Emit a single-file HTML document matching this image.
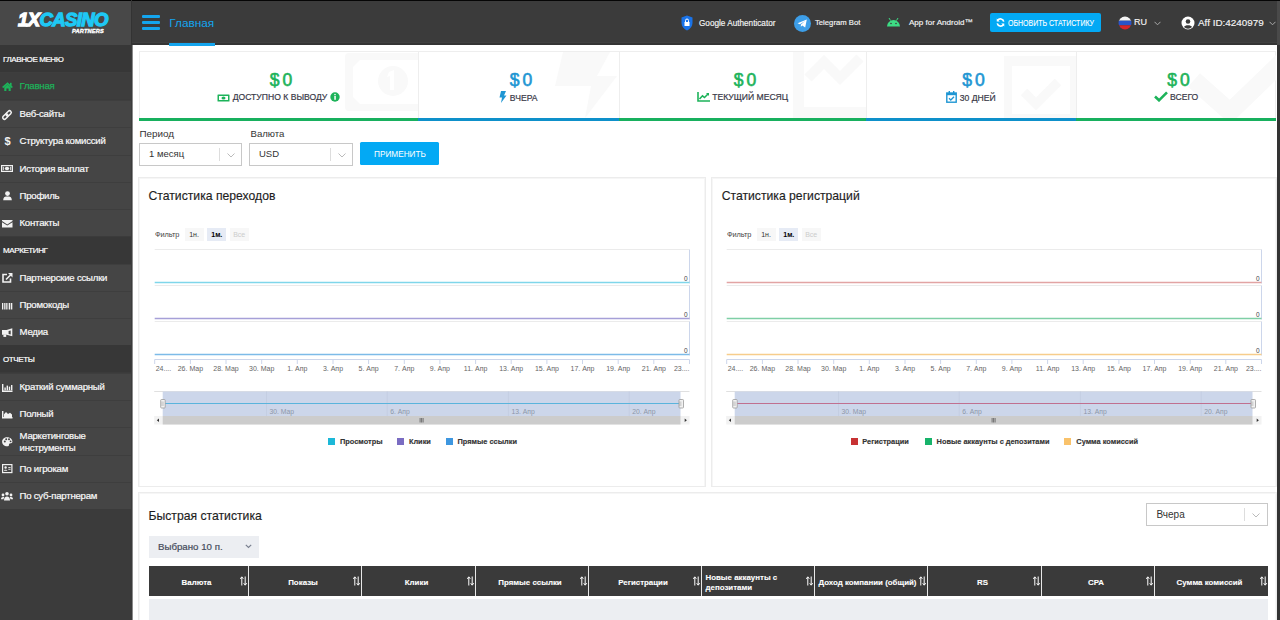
<!DOCTYPE html>
<html><head><meta charset="utf-8">
<style>
*{margin:0;padding:0;box-sizing:border-box}
html,body{width:1280px;height:620px;overflow:hidden;background:#fff;font-family:"Liberation Sans",sans-serif;color:#333}
.a{position:absolute}
#sb{left:0;top:0;width:132px;height:620px;background:#3b3b3b}
#logo{left:0;top:0;width:131px;height:45px;background:#484848}
.sec{position:absolute;left:0;width:131px;height:27px;background:#373737;color:#fff;font-size:8px;line-height:27px;padding-top:0.5px;padding-left:3px;letter-spacing:-0.4px;-webkit-text-stroke:0.2px #fff}
.mi{position:absolute;left:0;width:131px;height:27.3px;background:#454545;border-top:1px solid #3e3e3e;color:#fafafa;font-size:9.6px;letter-spacing:-0.22px;line-height:26.5px;padding-left:19.5px;white-space:nowrap;-webkit-text-stroke:0.2px #fafafa}
.mi.act{color:#1db35a;background:#3d3d3d;-webkit-text-stroke:0.25px #1db35a}
.mi svg{position:absolute;left:3px;top:9px}
#hdr{left:132px;top:0;width:1145px;height:45px;background:#3b3b3b;border-top:1px solid #151515}
#rstrip{left:1277px;top:0;width:3px;height:620px;background:#333}

.card{position:absolute;top:51px;height:70px;border-top:1px solid #eee;border-bottom:3px solid #18b05e}
.card.b{border-bottom-color:#0e90ca}
.val{position:absolute;left:4px;right:0;top:17.5px;text-align:center;font-size:17.5px;font-weight:normal;line-height:20px;letter-spacing:-1px;-webkit-text-stroke:0.6px currentColor}
.lbl{position:absolute;left:0;right:0;top:39px;text-align:center;font-size:8.6px;line-height:12px;color:#3a3a48;white-space:nowrap;-webkit-text-stroke:0.2px #3a3a48}
.lbl svg{vertical-align:-2px}
.sel{position:absolute;height:23px;border:1px solid #c8c8c8;background:#fff;font-size:9.5px;line-height:20px;padding-left:9px;color:#333}
.sel i{position:absolute;top:4px;bottom:4px;width:1px;background:#ddd}
.sel svg{position:absolute;top:8px}
.pan{position:absolute;border:1px solid #ececec;background:#fff;box-shadow:inset 1px 1px 0 #f6f6f6,inset -1px 0 0 #f6f6f6}
.ttl{position:absolute;font-size:12.2px;line-height:14px;color:#1e1e1e;-webkit-text-stroke:0.15px #1e1e1e}
.flt{position:absolute;font-size:7.4px;line-height:13px;color:#444;letter-spacing:-0.1px}
.fb{position:absolute;top:0;width:19px;height:13px;text-align:center;background:#f7f7f7;font-size:7px;line-height:13px;color:#333}
.hd{position:absolute;top:566px;height:30px;background:#3a3a3a;border-right:1px solid #e8e8e8;color:#fff;font-size:7.9px;font-weight:bold;line-height:34px;text-align:center;padding-right:4px;-webkit-text-stroke:0.1px #fff}
.hd span{position:absolute;right:1px;top:10px;line-height:0}.hd span svg{display:block}
</style></head><body>
<div id="sb" class="a">
  <div id="logo" class="a">
    <div class="a" style="left:18px;top:8.5px;font-size:18.5px;font-weight:bold;font-style:italic;letter-spacing:-0.6px;line-height:22px;white-space:nowrap"><span style="color:#fff;-webkit-text-stroke:1.3px #fff">1X</span><span style="color:#1ec8f5;-webkit-text-stroke:1.3px #1ec8f5">CASINO</span></div>
    <div class="a" style="left:72px;top:27.5px;font-size:5.6px;font-weight:bold;font-style:italic;color:#fff;letter-spacing:0.2px;line-height:6px;-webkit-text-stroke:0.35px #fff">PARTNERS</div>
  </div>
  <div class="sec" style="top:45px">ГЛАВНОЕ МЕНЮ</div>
  <div class="mi act" style="top:72px">Главная</div>
  <div class="mi" style="top:100px">Веб-сайты</div>
  <div class="mi" style="top:127.3px">Структура комиссий</div>
  <div class="mi" style="top:154.6px">История выплат</div>
  <div class="mi" style="top:181.9px">Профиль</div>
  <div class="mi" style="top:209.2px">Контакты</div>
  <div class="sec" style="top:236.5px">МАРКЕТИНГ</div>
  <div class="mi" style="top:263.5px">Партнерские ссылки</div>
  <div class="mi" style="top:290.8px">Промокоды</div>
  <div class="mi" style="top:318.1px">Медиа</div>
  <div class="sec" style="top:345.4px">ОТЧЕТЫ</div>
  <div class="mi" style="top:372.7px">Краткий суммарный</div>
  <div class="mi" style="top:400px">Полный</div>
  <div class="mi" style="top:427.3px;line-height:11.6px;padding-top:2px">Маркетинговые<br>инструменты</div>
  <div class="mi" style="top:454.6px">По игрокам</div>
  <div class="mi" style="top:481.9px">По суб-партнерам</div>
</div>
<svg class="a" style="left:1.5px;top:82px;overflow:visible" width="11" height="9" viewBox="0 0 11 9"><path d="M5.5 0.3 L11 5 L9.6 5.9 L5.5 2.4 L1.4 5.9 L0 5 Z" fill="#1db35a"/><path d="M2.3 5.2 L5.5 2.6 L8.7 5.2 V9 H6.6 V6.6 H4.4 V9 H2.3 Z" fill="#1db35a"/><rect x="8" y="0.8" width="1.6" height="3" fill="#1db35a"/></svg>
<svg class="a" style="left:2.3px;top:109.6px;overflow:visible" width="10" height="10" viewBox="0 0 10 10"><g transform="rotate(-45 5 5)"><rect x="4.3" y="3.3" width="6" height="3.4" rx="1.7" fill="none" stroke="#f2f2f2" stroke-width="1.5"/><rect x="-0.3" y="3.3" width="6" height="3.4" rx="1.7" fill="none" stroke="#f2f2f2" stroke-width="1.5"/></g></svg>
<svg class="a" style="left:3.5px;top:136.5px;overflow:visible" width="7" height="9" viewBox="0 0 7 9"><text x="3.5" y="8.4" font-size="11" font-weight="bold" text-anchor="middle" fill="#f2f2f2" font-family="Liberation Sans">$</text></svg>
<svg class="a" style="left:1px;top:165px;overflow:visible" width="12" height="7" viewBox="0 0 12 7"><rect x="0.6" y="0.6" width="10.8" height="5.8" fill="none" stroke="#f2f2f2" stroke-width="1.2"/><ellipse cx="6" cy="3.5" rx="2.2" ry="1.8" fill="#f2f2f2"/><rect x="1.8" y="1.8" width="1" height="3.4" fill="#f2f2f2"/><rect x="9.2" y="1.8" width="1" height="3.4" fill="#f2f2f2"/></svg>
<svg class="a" style="left:2.8px;top:191px;overflow:visible" width="9" height="9.5" viewBox="0 0 9 9.5"><circle cx="4.5" cy="2.6" r="2.4" fill="#f2f2f2"/><path d="M0.2 9.3 C0.2 6.3 1.8 5.4 3 5.4 H6 C7.2 5.4 8.8 6.3 8.8 9.3 Z" fill="#f2f2f2"/></svg>
<svg class="a" style="left:2px;top:219.5px;overflow:visible" width="10.5" height="7.5" viewBox="0 0 10.5 7.5"><path d="M0 0 H10.5 V1 L5.25 4.4 L0 1 Z" fill="#f2f2f2"/><path d="M0 2.2 L5.25 5.6 L10.5 2.2 V7.5 H0 Z" fill="#f2f2f2"/></svg>
<svg class="a" style="left:2px;top:272.5px;overflow:visible" width="10.5" height="10" viewBox="0 0 10.5 10"><path d="M5 1.5 H1 V9 H8.5 V5.5" stroke="#f2f2f2" stroke-width="1.6" fill="none"/><path d="M4 6.5 L9.3 1.2" stroke="#f2f2f2" stroke-width="1.6"/><path d="M6 0 H10.5 V4.5 Z" fill="#f2f2f2"/></svg>
<svg class="a" style="left:2px;top:302.5px;overflow:visible" width="10.5" height="6.5" viewBox="0 0 10.5 6.5"><rect x="0" y="0" width="1.3" height="6.5" fill="#f2f2f2"/><rect x="2" y="0" width="0.8" height="6.5" fill="#f2f2f2"/><rect x="3.5" y="0" width="1.3" height="6.5" fill="#f2f2f2"/><rect x="5.5" y="0" width="0.8" height="6.5" fill="#f2f2f2"/><rect x="7" y="0" width="1.3" height="6.5" fill="#f2f2f2"/><rect x="9" y="0" width="1.3" height="6.5" fill="#f2f2f2"/></svg>
<svg class="a" style="left:1.8px;top:327.6px;overflow:visible" width="10.5" height="9" viewBox="0 0 10.5 9"><path d="M0 2.1 H4.6 L10.3 0.2 V8.3 L4.6 6.8 H0 Z M6.6 3 V5.9 L8.7 6.6 V2.4 Z" fill="#f2f2f2" fill-rule="evenodd"/><rect x="1.4" y="6.5" width="2.8" height="2.4" fill="#f2f2f2"/></svg>
<svg class="a" style="left:2px;top:383.5px;overflow:visible" width="10.5" height="8" viewBox="0 0 10.5 8"><path d="M0.7 0 V7.3 H10.5" stroke="#f2f2f2" stroke-width="1.4" fill="none"/><rect x="2.4" y="3.5" width="1.4" height="2.8" fill="#f2f2f2"/><rect x="4.6" y="1.6" width="1.4" height="4.7" fill="#f2f2f2"/><rect x="6.8" y="2.6" width="1.4" height="3.7" fill="#f2f2f2"/><rect x="9" y="1" width="1.4" height="5.3" fill="#f2f2f2"/></svg>
<svg class="a" style="left:2px;top:410.5px;overflow:visible" width="10.5" height="7.5" viewBox="0 0 10.5 7.5"><path d="M0.7 0 V6.8 H10.5" stroke="#f2f2f2" stroke-width="1.4" fill="none"/><path d="M2 6 V3.3 L4 1 L6 3 L8 1.8 L10 3.5 V6 Z" fill="#f2f2f2"/></svg>
<svg class="a" style="left:1.8px;top:437px;overflow:visible" width="10.5" height="9.5" viewBox="0 0 10.5 9.5"><path d="M5.2 0.2 C8.4 0.2 10.4 2.4 10.4 4.6 C10.4 6.8 8 6.2 7.2 6.9 C6.5 7.6 7.8 9.3 5.2 9.3 C2.2 9.3 0.1 7 0.1 4.7 C0.1 2.2 2.3 0.2 5.2 0.2 Z" fill="#f2f2f2"/><circle cx="2.8" cy="4.5" r="1" fill="#454545"/><circle cx="4.2" cy="2.3" r="1" fill="#454545"/><circle cx="7" cy="2.3" r="1" fill="#454545"/><circle cx="8.6" cy="4.3" r="0.9" fill="#454545"/></svg>
<svg class="a" style="left:1.8px;top:463.8px;overflow:visible" width="10.5" height="9.2" viewBox="0 0 10.5 9.2"><rect x="0.6" y="0.6" width="9.3" height="8" fill="none" stroke="#f2f2f2" stroke-width="1.2"/><circle cx="3.6" cy="3.5" r="1.2" fill="#f2f2f2"/><path d="M1.8 6.8 C1.8 5.3 5.4 5.3 5.4 6.8 Z" fill="#f2f2f2"/><rect x="6.3" y="3" width="2.3" height="0.9" fill="#f2f2f2"/><rect x="6.3" y="4.8" width="2.3" height="0.9" fill="#f2f2f2"/></svg>
<svg class="a" style="left:1.2px;top:492.2px;overflow:visible" width="12" height="8.5" viewBox="0 0 12 8.5"><circle cx="6" cy="1.8" r="1.8" fill="#f2f2f2"/><circle cx="2" cy="3" r="1.4" fill="#f2f2f2"/><circle cx="10" cy="3" r="1.4" fill="#f2f2f2"/><path d="M3 8.5 C3 5.5 4.2 4.4 6 4.4 C7.8 4.4 9 5.5 9 8.5 Z" fill="#f2f2f2"/><path d="M0 7.3 C0 5.6 0.8 4.9 2 4.9 C2.6 4.9 3 5.1 3.3 5.3 C2.8 6 2.6 6.6 2.5 7.3 Z" fill="#f2f2f2"/><path d="M12 7.3 C12 5.6 11.2 4.9 10 4.9 C9.4 4.9 9 5.1 8.7 5.3 C9.2 6 9.4 6.6 9.5 7.3 Z" fill="#f2f2f2"/></svg>
<div id="hdr" class="a">
  <div class="a" style="left:10px;top:14px;width:18px;height:3px;background:#14a5ee;border-radius:1px"></div>
  <div class="a" style="left:10px;top:20px;width:18px;height:3px;background:#14a5ee;border-radius:1px"></div>
  <div class="a" style="left:10px;top:26px;width:18px;height:3px;background:#14a5ee;border-radius:1px"></div>
  <div class="a" style="left:37.3px;top:15.3px;font-size:11.8px;line-height:14px;color:#14a5ee">Главная</div>
  <div class="a" style="left:0;top:41px;width:1145px;height:1px;background:#404040"></div>
  <div class="a" style="left:0;top:42px;width:1145px;height:2px;background:#343434"></div>
  <div class="a" style="left:37px;top:42px;width:46px;height:3px;background:#14a5ee"></div>
  <svg class="a" style="left:549px;top:14px" width="12" height="16" viewBox="0 0 12 16"><path d="M6 0.5 L11.5 2.5 V8 C11.5 11.5 9 14 6 15.5 C3 14 0.5 11.5 0.5 8 V2.5 Z" fill="#1a73e8"/><rect x="3.5" y="7" width="5" height="4" fill="#fff"/><path d="M4.5 7 V5.5 A1.5 1.5 0 0 1 7.5 5.5 V7" stroke="#fff" stroke-width="1" fill="none"/></svg>
  <div class="a" style="left:567px;top:16.5px;font-size:8.2px;line-height:12px;color:#f4f4f4;-webkit-text-stroke:0.15px #f4f4f4">Google Authenticator</div>
  <svg class="a" style="left:662px;top:14px" width="17" height="17" viewBox="0 0 17 17"><circle cx="8.5" cy="8.5" r="8.5" fill="#3d9ee8"/><path d="M3.5 8.3 L12.8 4.6 L11.2 12.6 L8.3 10.4 L6.8 11.8 L6.9 9.6 L11.2 5.9 L5.9 9.2 Z" fill="#fff"/></svg>
  <div class="a" style="left:683px;top:16px;font-size:7.7px;line-height:12px;color:#f4f4f4;-webkit-text-stroke:0.15px #f4f4f4">Telegram Bot</div>
  <svg class="a" style="left:754px;top:15px" width="15" height="11" viewBox="0 0 15 11"><path d="M1 10.5 A6.5 6.5 0 0 1 14 10.5 Z" fill="#3ddc84"/><path d="M3 2 L4.5 4.5 M12 2 L10.5 4.5" stroke="#3ddc84" stroke-width="1"/><circle cx="5" cy="7.5" r="0.8" fill="#3b3b3b"/><circle cx="10" cy="7.5" r="0.8" fill="#3b3b3b"/></svg>
  <div class="a" style="left:777px;top:16px;font-size:8.05px;line-height:12px;color:#f4f4f4;-webkit-text-stroke:0.15px #f4f4f4">App for Android™</div>
  <div class="a" style="left:858px;top:12px;width:111px;height:19px;background:#03a9f4;border-radius:2px"></div>
  <svg class="a" style="left:864px;top:17px" width="9" height="9" viewBox="0 0 10 10"><path d="M8.6 4 A3.8 3.8 0 0 0 1.8 2.6" stroke="#fff" stroke-width="1.8" fill="none"/><path d="M0.8 0.6 V4 H4.2 Z" fill="#fff"/><path d="M1.4 6 A3.8 3.8 0 0 0 8.2 7.4" stroke="#fff" stroke-width="1.8" fill="none"/><path d="M9.2 9.4 V6 H5.8 Z" fill="#fff"/></svg>
  <div class="a" style="left:876px;top:16px;font-size:8.3px;line-height:12px;color:#fff;transform:scaleX(0.843);transform-origin:0 0;white-space:nowrap;-webkit-text-stroke:0.1px #fff">ОБНОВИТЬ СТАТИСТИКУ</div>
  <svg class="a" style="left:985.5px;top:14.8px" width="14" height="14" viewBox="0 0 14 14"><defs><clipPath id="fc"><circle cx="7" cy="7" r="6.5"/></clipPath></defs><g clip-path="url(#fc)"><rect x="0" y="0" width="14" height="4.7" fill="#f4f4f4"/><rect x="0" y="4.7" width="14" height="4.6" fill="#2a54c8"/><rect x="0" y="9.3" width="14" height="4.7" fill="#d8262a"/></g></svg>
  <div class="a" style="left:1002px;top:15px;font-size:9px;line-height:13px;color:#f4f4f4;-webkit-text-stroke:0.15px #f4f4f4">RU</div>
  <svg class="a" style="left:1022px;top:20px" width="7" height="5" viewBox="0 0 7 5"><path d="M0.5 0.8 L3.5 3.8 L6.5 0.8" stroke="#aaa" stroke-width="1" fill="none"/></svg>
  <svg class="a" style="left:1049px;top:14.8px" width="14" height="14" viewBox="0 0 14 14"><circle cx="7" cy="7" r="6.5" fill="#fff"/><circle cx="7" cy="5.5" r="2.3" fill="#3b3b3b"/><path d="M3 11 C4 8.8 10 8.8 11 11 A5.5 5.5 0 0 1 3 11 Z" fill="#3b3b3b"/></svg>
  <div class="a" style="left:1066px;top:15.3px;font-size:9.9px;line-height:13px;color:#f4f4f4;-webkit-text-stroke:0.15px #f4f4f4">Aff ID:4240979</div>
  <svg class="a" style="left:1137px;top:20px" width="7" height="5" viewBox="0 0 7 5"><path d="M0.5 0.8 L3.5 3.8 L6.5 0.8" stroke="#aaa" stroke-width="1" fill="none"/></svg>
</div>
<div class="a" style="left:139px;top:51px;width:1137px;height:70px;border-left:1px solid #eee;border-right:1px solid #eee"></div><svg class="a" style="left:345px;top:52px" width="73" height="60" viewBox="0 0 73 60"><rect x="0" y="1" width="90" height="58" rx="4" fill="#f9f9f9"/><path d="M15 8 H80 V52 H15 L8 45 V15 Z" fill="#fff"/><circle cx="48" cy="29" r="15" fill="#f9f9f9"/><path d="M44 20 L49 18 V38 H45 V24 L42 25 Z" fill="#fff"/></svg><svg class="a" style="left:555px;top:52px" width="64" height="66" viewBox="0 0 64 66"><path d="M8 0 H55 L42 24 H62 L30 66 L36 34 H0 Z" fill="#f9f9f9"/></svg><svg class="a" style="left:790px;top:52px" width="76" height="66" viewBox="0 0 76 66"><path d="M14 0 V55 H76 V66 H3 V0 Z" fill="#f9f9f9"/><path d="M18 26 L34 10 L50 26 L70 6" stroke="#f9f9f9" stroke-width="10" fill="none"/></svg><svg class="a" style="left:1000px;top:52px" width="76" height="66" viewBox="0 0 76 66"><rect x="4" y="4" width="72" height="62" fill="#f9f9f9"/><rect x="12" y="14" width="58" height="48" fill="#fff"/><path d="M24 40 L36 52 L58 30" stroke="#f9f9f9" stroke-width="9" fill="none"/></svg><svg class="a" style="left:1180px;top:52px" width="96" height="66" viewBox="0 0 96 66"><path d="M14 28 L50 60 L110 2" stroke="#f9f9f9" stroke-width="18" fill="none"/></svg><div class="card " style="left:139px;width:279px"><div class="val" style="color:#1db35a">$ 0</div><div class="lbl"><svg width="13" height="8" viewBox="0 0 13 8"><rect x="0.5" y="0.5" width="12" height="7" rx="0.5" fill="#1db35a"/><rect x="2" y="2" width="9" height="4" fill="#fff"/><ellipse cx="6.5" cy="4" rx="2" ry="1.6" fill="#1db35a"/></svg> ДОСТУПНО К ВЫВОДУ <svg width="10" height="10" viewBox="0 0 10 10"><circle cx="5" cy="5" r="4.7" fill="#1db35a"/><rect x="4.3" y="4" width="1.5" height="3.8" fill="#fff"/><circle cx="5" cy="2.6" r="0.8" fill="#fff"/></svg></div></div><div class="card b" style="left:418px;width:201px"><div class="val" style="color:#1e96d3">$ 0</div><div class="lbl"><svg width="8" height="12" viewBox="0 0 8 12"><path d="M2 0 H7 L5 4.5 H7.5 L2 12 L3 6.5 H0.5 Z" fill="#1e96d3"/></svg> ВЧЕРА</div></div><div class="card " style="left:619px;width:247px"><div class="val" style="color:#1db35a">$ 0</div><div class="lbl"><svg width="13" height="10" viewBox="0 0 13 10"><path d="M1 0 V9 H13" stroke="#1db35a" stroke-width="1.6" fill="none"/><path d="M2.5 7 L5.5 3.8 L7.5 5.5 L11 2" stroke="#1db35a" stroke-width="1.6" fill="none"/><path d="M9 1 H12 V4 Z" fill="#1db35a"/></svg> ТЕКУЩИЙ МЕСЯЦ</div></div><div class="card b" style="left:866px;width:210px"><div class="val" style="color:#1e96d3">$ 0</div><div class="lbl"><svg width="11" height="12" viewBox="0 0 11 12"><rect x="0.8" y="2" width="9.4" height="9.2" fill="none" stroke="#1e96d3" stroke-width="1.4"/><rect x="0.8" y="2" width="9.4" height="2.2" fill="#1e96d3"/><rect x="2.6" y="0" width="1.4" height="3" fill="#1e96d3"/><rect x="7" y="0" width="1.4" height="3" fill="#1e96d3"/><path d="M3 7.3 L4.8 9 L8 5.8" stroke="#1e96d3" stroke-width="1.3" fill="none"/></svg> 30 ДНЕЙ</div></div><div class="card " style="left:1076px;width:200px"><div class="val" style="color:#1db35a">$ 0</div><div class="lbl"><svg width="14" height="11" viewBox="0 0 14 11"><path d="M1 5.5 L5 9.3 L13 1.3" stroke="#1db35a" stroke-width="2.6" fill="none"/></svg> ВСЕГО</div></div><div class="a" style="left:418px;top:52px;width:1px;height:66px;background:#eee"></div><div class="a" style="left:619px;top:52px;width:1px;height:66px;background:#eee"></div><div class="a" style="left:866px;top:52px;width:1px;height:66px;background:#eee"></div><div class="a" style="left:1076px;top:52px;width:1px;height:66px;background:#eee"></div><div class="a" style="left:139.5px;top:127.7px;font-size:9.9px;line-height:12px;color:#333">Период</div><div class="a" style="left:250.5px;top:127.7px;font-size:9.6px;line-height:12px;color:#333">Валюта</div><div class="sel" style="left:139px;top:143px;width:103px">1 месяц<i style="left:79px"></i><span style="position:absolute;left:87px;top:0.5px"><svg width="8" height="5" viewBox="0 0 8 5"><path d="M0.5 0.5 L4 4 L7.5 0.5" stroke="#bbb" stroke-width="1" fill="none"/></svg></span></div><div class="sel" style="left:249px;top:143px;width:104px">USD<i style="left:80px"></i><span style="position:absolute;left:88px;top:0.5px"><svg width="8" height="5" viewBox="0 0 8 5"><path d="M0.5 0.5 L4 4 L7.5 0.5" stroke="#bbb" stroke-width="1" fill="none"/></svg></span></div><div class="a" style="left:360px;top:142px;width:79px;height:23px;background:#03a9f4;border-radius:1.5px"></div><div class="a" style="left:373.7px;top:148px;font-size:9.6px;line-height:12px;color:#fff;transform:scaleX(0.858);transform-origin:0 0;white-space:nowrap">ПРИМЕНИТЬ</div>
<div class="pan" style="left:138px;top:177px;width:568px;height:310px"></div>
<div class="ttl" style="left:148.5px;top:189px">Статистика переходов</div>
<div class="flt" style="left:155px;top:228px">Фильтр</div>
<div class="a" style="left:184.5px;top:228.4px;width:64px;height:13px"><div class="fb" style="left:0">1н.</div><div class="fb" style="left:22.8px;background:#e6ebf5;font-weight:bold;color:#000">1м.</div><div class="fb" style="left:45.2px;color:#ccc">Все</div></div>
<svg class="a" style="left:139px;top:240px" width="566" height="215" viewBox="0 0 566 215"><line x1="15.7" y1="9.5" x2="550.5" y2="9.5" stroke="#ebebeb" stroke-width="1"/><line x1="550.5" y1="9.5" x2="550.5" y2="43.5" stroke="#ccd6eb" stroke-width="1"/><line x1="15.7" y1="42.5" x2="550.5" y2="42.5" stroke="#7fd6ea" stroke-width="1.6"/><text x="548.5" y="41.0" font-size="6.5" fill="#444" text-anchor="end" font-family="Liberation Sans">0</text><line x1="15.7" y1="45.5" x2="550.5" y2="45.5" stroke="#ebebeb" stroke-width="1"/><line x1="550.5" y1="45.5" x2="550.5" y2="79.5" stroke="#ccd6eb" stroke-width="1"/><line x1="15.7" y1="78.5" x2="550.5" y2="78.5" stroke="#a6a0d8" stroke-width="1.6"/><text x="548.5" y="77.0" font-size="6.5" fill="#444" text-anchor="end" font-family="Liberation Sans">0</text><line x1="15.7" y1="81.5" x2="550.5" y2="81.5" stroke="#ebebeb" stroke-width="1"/><line x1="550.5" y1="81.5" x2="550.5" y2="115.5" stroke="#ccd6eb" stroke-width="1"/><line x1="15.7" y1="114.5" x2="550.5" y2="114.5" stroke="#7dbbe8" stroke-width="1.6"/><text x="548.5" y="113.0" font-size="6.5" fill="#444" text-anchor="end" font-family="Liberation Sans">0</text><line x1="15.7" y1="119.5" x2="550.5" y2="119.5" stroke="#ccd6eb" stroke-width="1"/><line x1="15.7" y1="119.5" x2="15.7" y2="124" stroke="#ccd6eb" stroke-width="1"/><text x="16.7" y="131" font-size="7" fill="#666" font-family="Liberation Sans">24....</text><line x1="51.4" y1="119.5" x2="51.4" y2="124" stroke="#ccd6eb" stroke-width="1"/><text x="51.4" y="131" font-size="7" fill="#666" text-anchor="middle" font-family="Liberation Sans">26. Мар</text><line x1="87.0" y1="119.5" x2="87.0" y2="124" stroke="#ccd6eb" stroke-width="1"/><text x="87.0" y="131" font-size="7" fill="#666" text-anchor="middle" font-family="Liberation Sans">28. Мар</text><line x1="122.7" y1="119.5" x2="122.7" y2="124" stroke="#ccd6eb" stroke-width="1"/><text x="122.7" y="131" font-size="7" fill="#666" text-anchor="middle" font-family="Liberation Sans">30. Мар</text><line x1="158.3" y1="119.5" x2="158.3" y2="124" stroke="#ccd6eb" stroke-width="1"/><text x="158.3" y="131" font-size="7" fill="#666" text-anchor="middle" font-family="Liberation Sans">1. Апр</text><line x1="194.0" y1="119.5" x2="194.0" y2="124" stroke="#ccd6eb" stroke-width="1"/><text x="194.0" y="131" font-size="7" fill="#666" text-anchor="middle" font-family="Liberation Sans">3. Апр</text><line x1="229.6" y1="119.5" x2="229.6" y2="124" stroke="#ccd6eb" stroke-width="1"/><text x="229.6" y="131" font-size="7" fill="#666" text-anchor="middle" font-family="Liberation Sans">5. Апр</text><line x1="265.3" y1="119.5" x2="265.3" y2="124" stroke="#ccd6eb" stroke-width="1"/><text x="265.3" y="131" font-size="7" fill="#666" text-anchor="middle" font-family="Liberation Sans">7. Апр</text><line x1="300.9" y1="119.5" x2="300.9" y2="124" stroke="#ccd6eb" stroke-width="1"/><text x="300.9" y="131" font-size="7" fill="#666" text-anchor="middle" font-family="Liberation Sans">9. Апр</text><line x1="336.6" y1="119.5" x2="336.6" y2="124" stroke="#ccd6eb" stroke-width="1"/><text x="336.6" y="131" font-size="7" fill="#666" text-anchor="middle" font-family="Liberation Sans">11. Апр</text><line x1="372.2" y1="119.5" x2="372.2" y2="124" stroke="#ccd6eb" stroke-width="1"/><text x="372.2" y="131" font-size="7" fill="#666" text-anchor="middle" font-family="Liberation Sans">13. Апр</text><line x1="407.9" y1="119.5" x2="407.9" y2="124" stroke="#ccd6eb" stroke-width="1"/><text x="407.9" y="131" font-size="7" fill="#666" text-anchor="middle" font-family="Liberation Sans">15. Апр</text><line x1="443.5" y1="119.5" x2="443.5" y2="124" stroke="#ccd6eb" stroke-width="1"/><text x="443.5" y="131" font-size="7" fill="#666" text-anchor="middle" font-family="Liberation Sans">17. Апр</text><line x1="479.2" y1="119.5" x2="479.2" y2="124" stroke="#ccd6eb" stroke-width="1"/><text x="479.2" y="131" font-size="7" fill="#666" text-anchor="middle" font-family="Liberation Sans">19. Апр</text><line x1="514.8" y1="119.5" x2="514.8" y2="124" stroke="#ccd6eb" stroke-width="1"/><text x="514.8" y="131" font-size="7" fill="#666" text-anchor="middle" font-family="Liberation Sans">21. Апр</text><line x1="550.5" y1="119.5" x2="550.5" y2="124" stroke="#ccd6eb" stroke-width="1"/><text x="550.5" y="131" font-size="7" fill="#666" text-anchor="end" font-family="Liberation Sans">23....</text><line x1="15.2" y1="151.5" x2="550.5" y2="151.5" stroke="#e0e0e0" stroke-width="1"/><rect x="23.7" y="151.5" width="517.8" height="24.5" fill="#ccd6ea"/><line x1="127.5" y1="151.5" x2="127.5" y2="176" stroke="#c4cee2" stroke-width="1"/><text x="130.5" y="173.5" font-size="6.8" fill="#8d96a8" font-family="Liberation Sans">30. Мар</text><line x1="248.2" y1="151.5" x2="248.2" y2="176" stroke="#c4cee2" stroke-width="1"/><text x="251.2" y="173.5" font-size="6.8" fill="#8d96a8" font-family="Liberation Sans">6. Апр</text><line x1="369.4" y1="151.5" x2="369.4" y2="176" stroke="#c4cee2" stroke-width="1"/><text x="372.4" y="173.5" font-size="6.8" fill="#8d96a8" font-family="Liberation Sans">13. Апр</text><line x1="490.2" y1="151.5" x2="490.2" y2="176" stroke="#c4cee2" stroke-width="1"/><text x="493.2" y="173.5" font-size="6.8" fill="#8d96a8" font-family="Liberation Sans">20. Апр</text><line x1="23.7" y1="163.5" x2="541.5" y2="163.5" stroke="#5ab4dc" stroke-width="1"/><rect x="21.7" y="159.5" width="4.5" height="8.5" rx="0.8" fill="#f2f2f2" stroke="#999" stroke-width="0.8"/><line x1="22.9" y1="161.5" x2="22.9" y2="166" stroke="#aaa" stroke-width="0.6"/><line x1="24.099999999999998" y1="161.5" x2="24.099999999999998" y2="166" stroke="#aaa" stroke-width="0.6"/><rect x="540" y="159.5" width="4.5" height="8.5" rx="0.8" fill="#f2f2f2" stroke="#999" stroke-width="0.8"/><line x1="540.7" y1="161.5" x2="540.7" y2="166" stroke="#aaa" stroke-width="0.6"/><line x1="541.9" y1="161.5" x2="541.9" y2="166" stroke="#aaa" stroke-width="0.6"/><rect x="15.2" y="176" width="535.3" height="8.5" fill="#f2f2f2"/><rect x="23.7" y="176" width="517.8" height="8.5" fill="#cccccc"/><path d="M20.0 178.5 L17.8 180.3 L20.0 182 Z" fill="#333"/><path d="M545.7 178.5 L547.9 180.3 L545.7 182 Z" fill="#333"/><line x1="281.1" y1="178" x2="281.1" y2="182.5" stroke="#333" stroke-width="0.6"/><line x1="282.6" y1="178" x2="282.6" y2="182.5" stroke="#333" stroke-width="0.6"/><line x1="284.1" y1="178" x2="284.1" y2="182.5" stroke="#333" stroke-width="0.6"/></svg>
<div class="a" style="left:328.4px;top:438.4px;width:7px;height:7px;background:#1cb8d8"></div>
<div class="a" style="left:340px;top:436.5px;font-size:7.4px;font-weight:bold;line-height:10px;color:#333;white-space:nowrap;-webkit-text-stroke:0.15px #333">Просмотры</div>
<div class="a" style="left:397.3px;top:438.4px;width:7px;height:7px;background:#7a6cc2"></div>
<div class="a" style="left:408.9px;top:436.5px;font-size:7.4px;font-weight:bold;line-height:10px;color:#333;white-space:nowrap;-webkit-text-stroke:0.15px #333">Клики</div>
<div class="a" style="left:445.7px;top:438.4px;width:7px;height:7px;background:#3e97e0"></div>
<div class="a" style="left:457.5px;top:436.5px;font-size:7.4px;font-weight:bold;line-height:10px;color:#333;white-space:nowrap;-webkit-text-stroke:0.15px #333">Прямые ссылки</div>
<div class="pan" style="left:711px;top:177px;width:566px;height:310px"></div>
<div class="ttl" style="left:721.7px;top:189px">Статистика регистраций</div>
<div class="flt" style="left:727px;top:228px">Фильтр</div>
<div class="a" style="left:756.5px;top:228.4px;width:64px;height:13px"><div class="fb" style="left:0">1н.</div><div class="fb" style="left:22.8px;background:#e6ebf5;font-weight:bold;color:#000">1м.</div><div class="fb" style="left:45.2px;color:#ccc">Все</div></div>
<svg class="a" style="left:711px;top:240px" width="566" height="215" viewBox="0 0 566 215"><line x1="15.7" y1="9.5" x2="550.5" y2="9.5" stroke="#ebebeb" stroke-width="1"/><line x1="550.5" y1="9.5" x2="550.5" y2="43.5" stroke="#ccd6eb" stroke-width="1"/><line x1="15.7" y1="42.5" x2="550.5" y2="42.5" stroke="#e2a4a4" stroke-width="1.6"/><text x="548.5" y="41.0" font-size="6.5" fill="#444" text-anchor="end" font-family="Liberation Sans">0</text><line x1="15.7" y1="45.5" x2="550.5" y2="45.5" stroke="#ebebeb" stroke-width="1"/><line x1="550.5" y1="45.5" x2="550.5" y2="79.5" stroke="#ccd6eb" stroke-width="1"/><line x1="15.7" y1="78.5" x2="550.5" y2="78.5" stroke="#7fcfa6" stroke-width="1.6"/><text x="548.5" y="77.0" font-size="6.5" fill="#444" text-anchor="end" font-family="Liberation Sans">0</text><line x1="15.7" y1="81.5" x2="550.5" y2="81.5" stroke="#ebebeb" stroke-width="1"/><line x1="550.5" y1="81.5" x2="550.5" y2="115.5" stroke="#ccd6eb" stroke-width="1"/><line x1="15.7" y1="114.5" x2="550.5" y2="114.5" stroke="#f7cd8c" stroke-width="1.6"/><text x="548.5" y="113.0" font-size="6.5" fill="#444" text-anchor="end" font-family="Liberation Sans">0</text><line x1="15.7" y1="119.5" x2="550.5" y2="119.5" stroke="#ccd6eb" stroke-width="1"/><line x1="15.7" y1="119.5" x2="15.7" y2="124" stroke="#ccd6eb" stroke-width="1"/><text x="16.7" y="131" font-size="7" fill="#666" font-family="Liberation Sans">24....</text><line x1="51.4" y1="119.5" x2="51.4" y2="124" stroke="#ccd6eb" stroke-width="1"/><text x="51.4" y="131" font-size="7" fill="#666" text-anchor="middle" font-family="Liberation Sans">26. Мар</text><line x1="87.0" y1="119.5" x2="87.0" y2="124" stroke="#ccd6eb" stroke-width="1"/><text x="87.0" y="131" font-size="7" fill="#666" text-anchor="middle" font-family="Liberation Sans">28. Мар</text><line x1="122.7" y1="119.5" x2="122.7" y2="124" stroke="#ccd6eb" stroke-width="1"/><text x="122.7" y="131" font-size="7" fill="#666" text-anchor="middle" font-family="Liberation Sans">30. Мар</text><line x1="158.3" y1="119.5" x2="158.3" y2="124" stroke="#ccd6eb" stroke-width="1"/><text x="158.3" y="131" font-size="7" fill="#666" text-anchor="middle" font-family="Liberation Sans">1. Апр</text><line x1="194.0" y1="119.5" x2="194.0" y2="124" stroke="#ccd6eb" stroke-width="1"/><text x="194.0" y="131" font-size="7" fill="#666" text-anchor="middle" font-family="Liberation Sans">3. Апр</text><line x1="229.6" y1="119.5" x2="229.6" y2="124" stroke="#ccd6eb" stroke-width="1"/><text x="229.6" y="131" font-size="7" fill="#666" text-anchor="middle" font-family="Liberation Sans">5. Апр</text><line x1="265.3" y1="119.5" x2="265.3" y2="124" stroke="#ccd6eb" stroke-width="1"/><text x="265.3" y="131" font-size="7" fill="#666" text-anchor="middle" font-family="Liberation Sans">7. Апр</text><line x1="300.9" y1="119.5" x2="300.9" y2="124" stroke="#ccd6eb" stroke-width="1"/><text x="300.9" y="131" font-size="7" fill="#666" text-anchor="middle" font-family="Liberation Sans">9. Апр</text><line x1="336.6" y1="119.5" x2="336.6" y2="124" stroke="#ccd6eb" stroke-width="1"/><text x="336.6" y="131" font-size="7" fill="#666" text-anchor="middle" font-family="Liberation Sans">11. Апр</text><line x1="372.2" y1="119.5" x2="372.2" y2="124" stroke="#ccd6eb" stroke-width="1"/><text x="372.2" y="131" font-size="7" fill="#666" text-anchor="middle" font-family="Liberation Sans">13. Апр</text><line x1="407.9" y1="119.5" x2="407.9" y2="124" stroke="#ccd6eb" stroke-width="1"/><text x="407.9" y="131" font-size="7" fill="#666" text-anchor="middle" font-family="Liberation Sans">15. Апр</text><line x1="443.5" y1="119.5" x2="443.5" y2="124" stroke="#ccd6eb" stroke-width="1"/><text x="443.5" y="131" font-size="7" fill="#666" text-anchor="middle" font-family="Liberation Sans">17. Апр</text><line x1="479.2" y1="119.5" x2="479.2" y2="124" stroke="#ccd6eb" stroke-width="1"/><text x="479.2" y="131" font-size="7" fill="#666" text-anchor="middle" font-family="Liberation Sans">19. Апр</text><line x1="514.8" y1="119.5" x2="514.8" y2="124" stroke="#ccd6eb" stroke-width="1"/><text x="514.8" y="131" font-size="7" fill="#666" text-anchor="middle" font-family="Liberation Sans">21. Апр</text><line x1="550.5" y1="119.5" x2="550.5" y2="124" stroke="#ccd6eb" stroke-width="1"/><text x="550.5" y="131" font-size="7" fill="#666" text-anchor="end" font-family="Liberation Sans">23....</text><line x1="15.2" y1="151.5" x2="550.5" y2="151.5" stroke="#e0e0e0" stroke-width="1"/><rect x="23.7" y="151.5" width="517.8" height="24.5" fill="#ccd6ea"/><line x1="127.5" y1="151.5" x2="127.5" y2="176" stroke="#c4cee2" stroke-width="1"/><text x="130.5" y="173.5" font-size="6.8" fill="#8d96a8" font-family="Liberation Sans">30. Мар</text><line x1="248.2" y1="151.5" x2="248.2" y2="176" stroke="#c4cee2" stroke-width="1"/><text x="251.2" y="173.5" font-size="6.8" fill="#8d96a8" font-family="Liberation Sans">6. Апр</text><line x1="369.4" y1="151.5" x2="369.4" y2="176" stroke="#c4cee2" stroke-width="1"/><text x="372.4" y="173.5" font-size="6.8" fill="#8d96a8" font-family="Liberation Sans">13. Апр</text><line x1="490.2" y1="151.5" x2="490.2" y2="176" stroke="#c4cee2" stroke-width="1"/><text x="493.2" y="173.5" font-size="6.8" fill="#8d96a8" font-family="Liberation Sans">20. Апр</text><line x1="23.7" y1="163.5" x2="541.5" y2="163.5" stroke="#c07090" stroke-width="1"/><rect x="21.7" y="159.5" width="4.5" height="8.5" rx="0.8" fill="#f2f2f2" stroke="#999" stroke-width="0.8"/><line x1="22.9" y1="161.5" x2="22.9" y2="166" stroke="#aaa" stroke-width="0.6"/><line x1="24.099999999999998" y1="161.5" x2="24.099999999999998" y2="166" stroke="#aaa" stroke-width="0.6"/><rect x="540" y="159.5" width="4.5" height="8.5" rx="0.8" fill="#f2f2f2" stroke="#999" stroke-width="0.8"/><line x1="540.7" y1="161.5" x2="540.7" y2="166" stroke="#aaa" stroke-width="0.6"/><line x1="541.9" y1="161.5" x2="541.9" y2="166" stroke="#aaa" stroke-width="0.6"/><rect x="15.2" y="176" width="535.3" height="8.5" fill="#f2f2f2"/><rect x="23.7" y="176" width="517.8" height="8.5" fill="#cccccc"/><path d="M20.0 178.5 L17.8 180.3 L20.0 182 Z" fill="#333"/><path d="M545.7 178.5 L547.9 180.3 L545.7 182 Z" fill="#333"/><line x1="281.1" y1="178" x2="281.1" y2="182.5" stroke="#333" stroke-width="0.6"/><line x1="282.6" y1="178" x2="282.6" y2="182.5" stroke="#333" stroke-width="0.6"/><line x1="284.1" y1="178" x2="284.1" y2="182.5" stroke="#333" stroke-width="0.6"/></svg>
<div class="a" style="left:850.6px;top:438.4px;width:7px;height:7px;background:#c73233"></div>
<div class="a" style="left:862.3px;top:436.5px;font-size:7.4px;font-weight:bold;line-height:10px;color:#333;white-space:nowrap;-webkit-text-stroke:0.15px #333">Регистрации</div>
<div class="a" style="left:924.7px;top:438.4px;width:7px;height:7px;background:#17b36a"></div>
<div class="a" style="left:936.6px;top:436.5px;font-size:7.4px;font-weight:bold;line-height:10px;color:#333;white-space:nowrap;-webkit-text-stroke:0.15px #333">Новые аккаунты с депозитами</div>
<div class="a" style="left:1064.2px;top:438.4px;width:7px;height:7px;background:#f9c26b"></div>
<div class="a" style="left:1076.3px;top:436.5px;font-size:7.4px;font-weight:bold;line-height:10px;color:#333;white-space:nowrap;-webkit-text-stroke:0.15px #333">Сумма комиссий</div>
<div class="pan" style="left:138px;top:492px;width:1139px;height:140px"></div>
<div class="ttl" style="left:148.5px;top:508.8px">Быстрая статистика</div>
<div class="a" style="left:148.5px;top:535.5px;width:110.5px;height:22.5px;background:#eceef2;font-size:9.7px;line-height:22.5px;padding-left:9.5px;color:#454b5a;-webkit-text-stroke:0.2px #454b5a">Выбрано 10 п.<span style="position:absolute;left:96px;top:-1px"><svg width="7" height="5" viewBox="0 0 7 5"><path d="M0.8 0.8 L3.5 3.5 L6.2 0.8" stroke="#7a8090" stroke-width="1.2" fill="none"/></svg></span></div>
<div class="sel" style="left:1146px;top:503px;width:122px;height:23px;line-height:21px;padding-left:9.5px;font-size:10px;color:#333">Вчера<i style="left:97px"></i><span style="position:absolute;left:105px;top:1px"><svg width="8" height="5" viewBox="0 0 8 5"><path d="M0.5 0.5 L4 4 L7.5 0.5" stroke="#bbb" stroke-width="1" fill="none"/></svg></span></div>
<div class="hd" style="left:149px;width:100px">Валюта<span style="position:absolute;right:1px;top:10px;line-height:0"><svg width="7" height="10" viewBox="0 0 7 10"><path d="M1.8 9.5 V1.2 M0.3 2.8 L1.8 0.8 L3.3 2.8" stroke="#fff" stroke-width="1" fill="none"/><path d="M5.2 0.5 V8.8 M3.7 7.2 L5.2 9.2 L6.7 7.2" stroke="#fff" stroke-width="1" fill="none"/></svg></span></div>
<div class="hd" style="left:249px;width:113px">Показы<span style="position:absolute;right:1px;top:10px;line-height:0"><svg width="7" height="10" viewBox="0 0 7 10"><path d="M1.8 9.5 V1.2 M0.3 2.8 L1.8 0.8 L3.3 2.8" stroke="#fff" stroke-width="1" fill="none"/><path d="M5.2 0.5 V8.8 M3.7 7.2 L5.2 9.2 L6.7 7.2" stroke="#fff" stroke-width="1" fill="none"/></svg></span></div>
<div class="hd" style="left:362px;width:114px">Клики<span style="position:absolute;right:1px;top:10px;line-height:0"><svg width="7" height="10" viewBox="0 0 7 10"><path d="M1.8 9.5 V1.2 M0.3 2.8 L1.8 0.8 L3.3 2.8" stroke="#fff" stroke-width="1" fill="none"/><path d="M5.2 0.5 V8.8 M3.7 7.2 L5.2 9.2 L6.7 7.2" stroke="#fff" stroke-width="1" fill="none"/></svg></span></div>
<div class="hd" style="left:476px;width:113px">Прямые ссылки<span style="position:absolute;right:1px;top:10px;line-height:0"><svg width="7" height="10" viewBox="0 0 7 10"><path d="M1.8 9.5 V1.2 M0.3 2.8 L1.8 0.8 L3.3 2.8" stroke="#fff" stroke-width="1" fill="none"/><path d="M5.2 0.5 V8.8 M3.7 7.2 L5.2 9.2 L6.7 7.2" stroke="#fff" stroke-width="1" fill="none"/></svg></span></div>
<div class="hd" style="left:589px;width:113px">Регистрации<span style="position:absolute;right:1px;top:10px;line-height:0"><svg width="7" height="10" viewBox="0 0 7 10"><path d="M1.8 9.5 V1.2 M0.3 2.8 L1.8 0.8 L3.3 2.8" stroke="#fff" stroke-width="1" fill="none"/><path d="M5.2 0.5 V8.8 M3.7 7.2 L5.2 9.2 L6.7 7.2" stroke="#fff" stroke-width="1" fill="none"/></svg></span></div>
<div class="hd" style="left:702px;width:113px;text-align:left;padding-left:3.5px;line-height:10px;padding-top:6.5px">Новые аккаунты с<br>депозитами<span style="position:absolute;right:1px;top:10px"><svg width="7" height="10" viewBox="0 0 7 10"><path d="M1.8 9.5 V1.2 M0.3 2.8 L1.8 0.8 L3.3 2.8" stroke="#fff" stroke-width="1" fill="none"/><path d="M5.2 0.5 V8.8 M3.7 7.2 L5.2 9.2 L6.7 7.2" stroke="#fff" stroke-width="1" fill="none"/></svg></span></div>
<div class="hd" style="left:815px;width:113px;text-align:left;padding-left:3.5px;white-space:nowrap">Доход компании (общий)<span style="position:absolute;right:1px;top:10px;line-height:0"><svg width="7" height="10" viewBox="0 0 7 10"><path d="M1.8 9.5 V1.2 M0.3 2.8 L1.8 0.8 L3.3 2.8" stroke="#fff" stroke-width="1" fill="none"/><path d="M5.2 0.5 V8.8 M3.7 7.2 L5.2 9.2 L6.7 7.2" stroke="#fff" stroke-width="1" fill="none"/></svg></span></div>
<div class="hd" style="left:928px;width:114px">RS<span style="position:absolute;right:1px;top:10px;line-height:0"><svg width="7" height="10" viewBox="0 0 7 10"><path d="M1.8 9.5 V1.2 M0.3 2.8 L1.8 0.8 L3.3 2.8" stroke="#fff" stroke-width="1" fill="none"/><path d="M5.2 0.5 V8.8 M3.7 7.2 L5.2 9.2 L6.7 7.2" stroke="#fff" stroke-width="1" fill="none"/></svg></span></div>
<div class="hd" style="left:1042px;width:113px">CPA<span style="position:absolute;right:1px;top:10px;line-height:0"><svg width="7" height="10" viewBox="0 0 7 10"><path d="M1.8 9.5 V1.2 M0.3 2.8 L1.8 0.8 L3.3 2.8" stroke="#fff" stroke-width="1" fill="none"/><path d="M5.2 0.5 V8.8 M3.7 7.2 L5.2 9.2 L6.7 7.2" stroke="#fff" stroke-width="1" fill="none"/></svg></span></div>
<div class="hd" style="left:1155px;width:113px;border-right:0">Сумма комиссий<span style="position:absolute;right:1px;top:10px;line-height:0"><svg width="7" height="10" viewBox="0 0 7 10"><path d="M1.8 9.5 V1.2 M0.3 2.8 L1.8 0.8 L3.3 2.8" stroke="#fff" stroke-width="1" fill="none"/><path d="M5.2 0.5 V8.8 M3.7 7.2 L5.2 9.2 L6.7 7.2" stroke="#fff" stroke-width="1" fill="none"/></svg></span></div>
<div class="a" style="left:149px;top:599px;width:1119px;height:30px;background:#eceef2"></div>
<div id="rstrip" class="a"></div>
<div class="a" style="left:1277px;top:1px;width:3px;height:44px;background:#4a4a4a"></div>
<div class="a" style="left:0;top:0;width:1280px;height:1px;background:#050505"></div>
<div class="a" style="left:131px;top:0;width:1px;height:45px;background:#333"></div>
<div class="a" style="left:132px;top:45px;width:1px;height:575px;background:#8a8a8a"></div>
</body></html>
